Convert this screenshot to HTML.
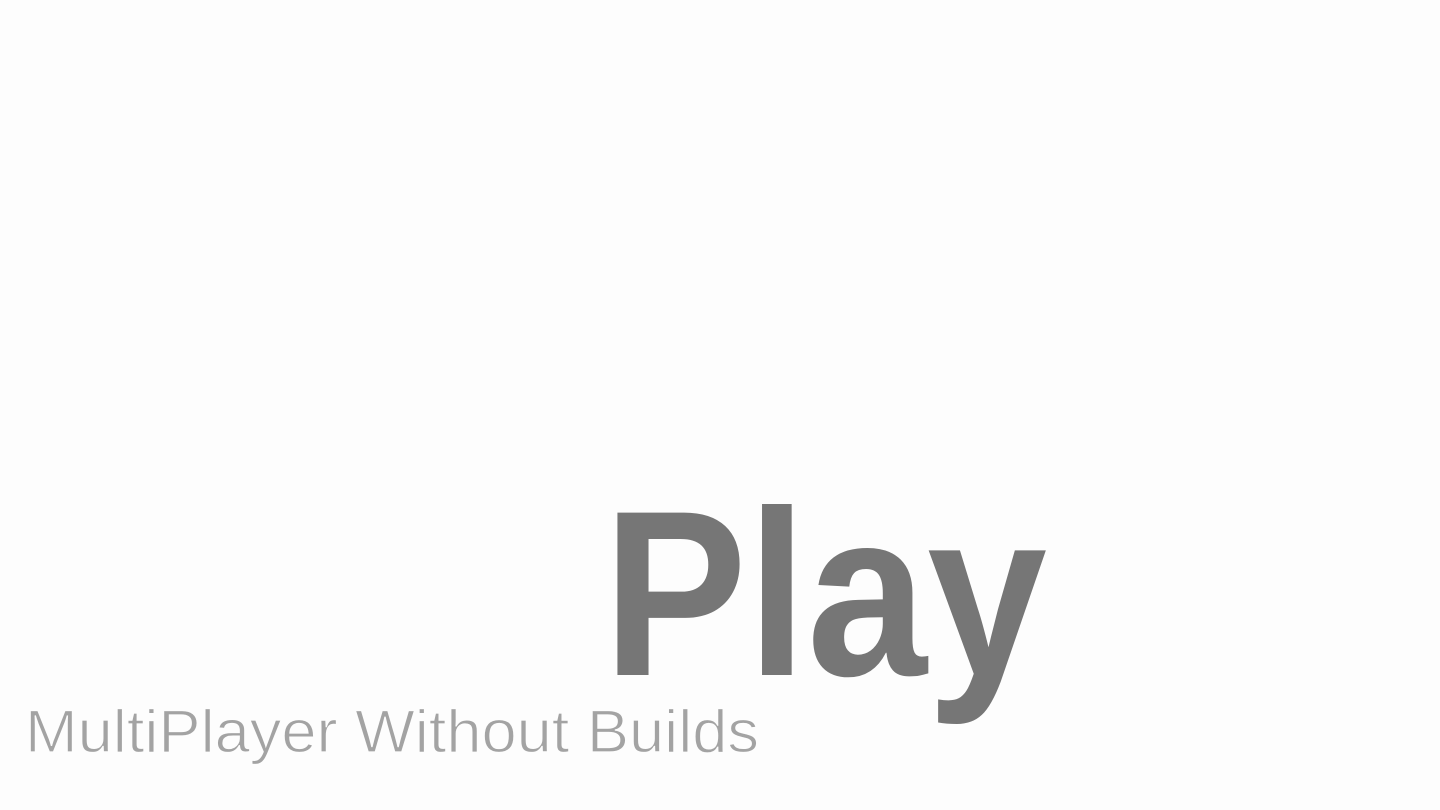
<!DOCTYPE html>
<html><head><meta charset="utf-8"><style>
html,body{margin:0;padding:0;background:#fdfdfd;width:1440px;height:810px;overflow:hidden}
svg{position:absolute;left:0;top:0}
</style></head><body>
<svg width="1440" height="810" viewBox="0 0 1440 810">
<text x="603" y="675" font-family="Liberation Sans, sans-serif" font-weight="bold" font-size="236" fill="#767676" textLength="444" lengthAdjust="spacingAndGlyphs">Play</text>
<text x="25" y="752" font-family="Liberation Sans, sans-serif" font-size="60" fill="#a3a3a3" stroke="#fdfdfd" stroke-width="1.2" paint-order="normal" textLength="734" lengthAdjust="spacingAndGlyphs">MultiPlayer Without Builds</text>
</svg>
</body></html>
